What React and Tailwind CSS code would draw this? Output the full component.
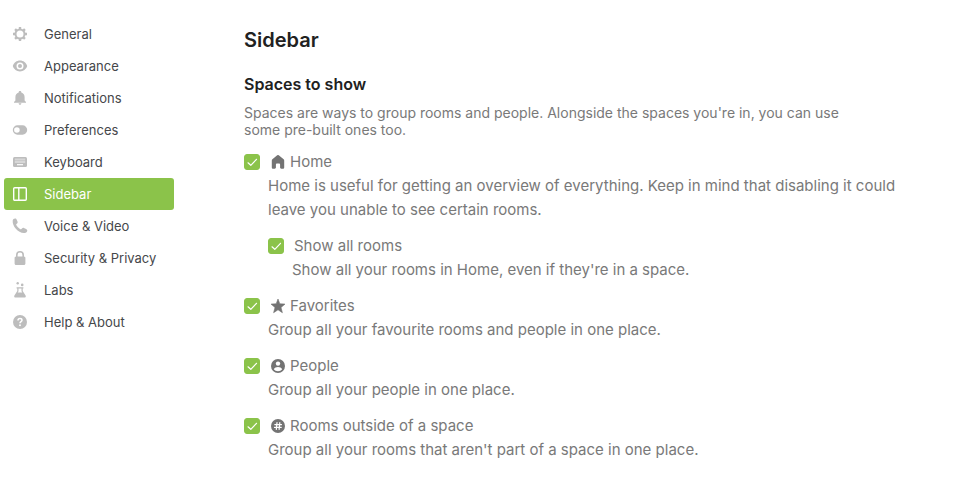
import React, { useState } from "react";

function GearIcon() {
  return (
    <svg viewBox="0 0 16 16" className="size-4" fill="none" stroke="currentColor" aria-hidden="true">
      <circle cx="8" cy="8" r="4.500" strokeWidth="2" />
      <path
        d="M8 1v2M8 13v2M1 8h2M13 8h2M3.050 3.050l1.400 1.400M11.550 11.550l1.400 1.400M3.050 12.950l1.400-1.400M11.550 4.450l1.400-1.400"
        strokeWidth="2.400"
      />
    </svg>
  );
}

function EyeIcon() {
  return (
    <svg viewBox="0 0 16 16" className="size-4" fill="currentColor" aria-hidden="true">
      <path
        fillRule="evenodd"
        d="M8 2.600C4.700 2.600 1.800 4.800.8 8c1 3.200 3.900 5.400 7.200 5.400s6.200-2.200 7.200-5.400c-1-3.200-3.900-5.400-7.200-5.400ZM8 4.500a3.500 3.500 0 1 1 0 7 3.500 3.500 0 0 1 0-7Z"
      />
      <circle cx="8" cy="8" r="2" />
    </svg>
  );
}

function BellIcon() {
  return (
    <svg viewBox="0 0 16 16" className="size-4" fill="currentColor" aria-hidden="true">
      <path d="M8 1c.8 0 1.300.5 1.300 1.200v.4C11.500 3.200 12.600 5 12.600 7.200v3.300l1.400 1.400v.9H2v-.9l1.400-1.400V7.200c0-2.200 1.100-4 3.300-4.600v-.4C6.700 1.500 7.200 1 8 1ZM6.600 13.300h2.800c0 .8-.6 1.500-1.400 1.500s-1.400-.7-1.400-1.500Z" />
    </svg>
  );
}

function ToggleIcon() {
  return (
    <svg viewBox="0 0 16 16" className="size-4" fill="currentColor" aria-hidden="true">
      <path
        fillRule="evenodd"
        d="M5.500 3.300h5a4.700 4.700 0 0 1 0 9.400h-5a4.700 4.700 0 0 1 0-9.400ZM4.900 5.200a2.800 2.800 0 1 0 0 5.600 2.800 2.800 0 0 0 0-5.600Z"
      />
    </svg>
  );
}

function KeyboardIcon() {
  return (
    <svg viewBox="0 0 16 16" className="size-4" fill="currentColor" aria-hidden="true">
      <rect x="1" y="3" width="14" height="10" rx="1.500" />
      <path d="M2.800 5.600h10.400M2.800 8h10.400" stroke="#fff" strokeWidth="2" opacity=".4" />
      <path d="M5 10.700h6" stroke="#fff" strokeWidth="1.200" />
    </svg>
  );
}

function PanelIcon() {
  return (
    <svg viewBox="0 0 16 16" className="size-4" fill="none" stroke="currentColor" strokeWidth="1.400" aria-hidden="true">
      <rect x="1.700" y="1.700" width="12.600" height="12.600" rx="1" />
      <path d="M6.800 2v12" />
    </svg>
  );
}

function PhoneIcon() {
  return (
    <svg viewBox="0 0 16 16" className="size-4" fill="currentColor" aria-hidden="true">
      <path d="M.7 2.600C.9 1.300 2 .4 3.200.5c.8 0 1.200.5 1.500 1.200l.8 1.800c.3.800.2 1.400-.4 1.900l-.7.6c-.3.300-.3.700-.1 1.100.9 1.700 2.300 3.100 4 4.100.4.200.8.200 1.100-.1l.6-.7c.5-.6 1.200-.7 1.900-.4l2.200.9c.8.300 1.200.9 1.200 1.600-.1 1.300-1.100 2.400-2.600 2.500C6.500 15.600.1 8.500.7 2.600Z" />
    </svg>
  );
}

function LockIcon() {
  return (
    <svg viewBox="0 0 16 16" className="size-4" fill="currentColor" aria-hidden="true">
      <path
        fillRule="evenodd"
        d="M4 6.500V5a4 4 0 0 1 8 0v1.500c.8.100 1.400.6 1.400 1.400v5.600c0 .9-.6 1.500-1.500 1.500H4.100c-.9 0-1.500-.6-1.500-1.500V7.900c0-.8.6-1.300 1.400-1.400Zm1.600 0h4.800V5a2.400 2.400 0 0 0-4.800 0Z"
      />
    </svg>
  );
}

function FlaskIcon() {
  return (
    <svg viewBox="0 0 16 16" className="size-4" fill="currentColor" aria-hidden="true">
      <circle cx="5.700" cy="1.200" r="1.200" />
      <circle cx="10.200" cy="2.900" r="1.300" />
      <path
        fillRule="evenodd"
        d="M4.600 5.200h6.800v1.200h-.7v2.500l2.900 4.500c.6 1-.1 2.100-1.200 2.100H3.600c-1.100 0-1.800-1.100-1.200-2.100l2.900-4.500V6.400h-.7Zm1.900 1.200v2.900L5.700 10.600h4.600L9.500 9.300V6.400Z"
      />
    </svg>
  );
}

function HelpIcon() {
  return (
    <svg viewBox="0 0 16 16" className="size-4" aria-hidden="true">
      <circle cx="8" cy="8" r="7" fill="currentColor" />
      <path d="M6 6.500C6 5.200 6.800 4.500 8 4.500s2 .7 2 1.700c0 1.400-2 1.500-2 3.100" fill="none" stroke="#fff" strokeWidth="1.500" />
      <circle cx="8" cy="11.300" r=".95" fill="#fff" />
    </svg>
  );
}

function HomeIcon() {
  return (
    <svg viewBox="0 0 16 16" className="size-4" fill="currentColor" aria-hidden="true">
      <path d="M7.200 1.300a1.300 1.300 0 0 1 1.600 0l4.800 4c.4.300.6.700.6 1.200v7c0 .8-.6 1.300-1.300 1.300h-1.600c-.7 0-1.200-.5-1.200-1.200V10.500c0-.5-.4-.9-.9-.9H6.800c-.5 0-.9.4-.9.900v3.100c0 .7-.5 1.200-1.200 1.200H3.100c-.7 0-1.300-.5-1.300-1.300v-7c0-.5.2-.9.6-1.200Z" />
    </svg>
  );
}

function StarIcon() {
  return (
    <svg viewBox="0 0 16 16" className="size-4" fill="currentColor" stroke="currentColor" strokeWidth=".6" strokeLinejoin="round" aria-hidden="true">
      <path d="M8 1 9.800 5.800 15 6.100 11 9.500 12.400 14.700 8 11.800 3.600 14.700 5 9.500 1 6.100 6.200 5.800Z" />
    </svg>
  );
}

function PersonIcon() {
  return (
    <svg viewBox="0 0 16 16" className="size-4" aria-hidden="true">
      <circle cx="8" cy="8" r="7" fill="currentColor" />
      <circle cx="8" cy="5.600" r="2.200" fill="#fff" />
      <path d="M3.800 11.200C4.600 9.600 6.200 8.900 8 8.900s3.400.7 4.200 2.300C11.300 12.500 9.700 13.200 8 13.200s-3.300-.7-4.200-2Z" fill="#fff" />
    </svg>
  );
}

function HashIcon() {
  return (
    <svg viewBox="0 0 16 16" className="size-4" aria-hidden="true">
      <circle cx="8" cy="8" r="7" fill="currentColor" />
      <path d="M7 4.600 6.300 11.400M9.800 4.600 9.100 11.400M4.800 6.600h6.700M4.500 9.400h6.700" fill="none" stroke="#fff" strokeWidth="1.200" strokeLinecap="round" />
    </svg>
  );
}

const tabs = [
  { label: "General", Icon: GearIcon },
  { label: "Appearance", Icon: EyeIcon },
  { label: "Notifications", Icon: BellIcon },
  { label: "Preferences", Icon: ToggleIcon },
  { label: "Keyboard", Icon: KeyboardIcon },
  { label: "Sidebar", Icon: PanelIcon },
  { label: "Voice & Video", Icon: PhoneIcon },
  { label: "Security & Privacy", Icon: LockIcon },
  { label: "Labs", Icon: FlaskIcon },
  { label: "Help & About", Icon: HelpIcon },
];

function Tab({ label, Icon, active, onSelect }) {
  return (
    <button
      type="button"
      onClick={onSelect}
      aria-current={active ? "page" : undefined}
      className={
        active
          ? "flex h-8 w-full items-center gap-4 rounded-[3px] bg-[#8bc34a] px-2 text-left text-white"
          : "flex h-8 w-full items-center gap-4 rounded-[3px] px-2 text-left text-[#45474a]"
      }
    >
      <span className={active ? "text-white" : "text-[#bdbdbd]"}>
        <Icon />
      </span>
      {label}
    </button>
  );
}

function Option({ id, label, Icon, description, children }) {
  const [checked, setChecked] = useState(true);
  return (
    <div>
      <div className="flex h-6 items-center gap-2.5">
        <span className="grid size-4 shrink-0">
          <input
            id={id}
            type="checkbox"
            checked={checked}
            onChange={(event) => setChecked(event.target.checked)}
            aria-describedby={`${id}-description`}
            className="col-start-1 row-start-1 size-4 appearance-none rounded-[3px] border border-[#8bc34a] checked:bg-[#8bc34a]"
          />
          {checked && (
            <svg viewBox="0 0 16 16" className="pointer-events-none col-start-1 row-start-1 size-4" fill="none" stroke="#fff" strokeWidth="1.200" strokeLinecap="round" strokeLinejoin="round" aria-hidden="true">
              <path d="M4 8.800 6.800 11.300 12.500 5.300" />
            </svg>
          )}
        </span>
        <label htmlFor={id} className="flex items-center gap-1">
          {Icon && (
            <span className="text-[#737373]">
              <Icon />
            </span>
          )}
          {label}
        </label>
      </div>
      <p id={`${id}-description`} className="pl-6">
        {description}
      </p>
      {children && <div className="mt-3 pl-6">{children}</div>}
    </div>
  );
}

export default function App() {
  const [current, setCurrent] = useState("Sidebar");
  return (
    <div className="flex min-h-screen gap-[70px] bg-white pr-8 pl-1 font-['Inter','Liberation_Sans',sans-serif] text-[15px] leading-6 text-[#797979]">
      <nav aria-label="Settings" className="w-[170px] shrink-0 pt-[18px] text-[13px]">
        {tabs.map((tab) => (
          <Tab key={tab.label} {...tab} active={tab.label === current} onSelect={() => setCurrent(tab.label)} />
        ))}
      </nav>
      <main className="min-w-0 flex-1 pt-7 pb-10">
        <h1 className="text-xl leading-6 font-semibold text-[#212121]">Sidebar</h1>
        <h2 className="mt-5 text-base leading-6 font-semibold text-[#212121]">Spaces to show</h2>
        <p className="mt-2 mr-20 text-sm leading-[17px]">
          Spaces are ways to group rooms and people. Alongside the spaces you're in, you can use some pre-built ones too.
        </p>
        <div className="mt-3 flex flex-col gap-3">
          <Option
            id="home"
            label="Home"
            Icon={HomeIcon}
            description="Home is useful for getting an overview of everything. Keep in mind that disabling it could leave you unable to see certain rooms."
          >
            <Option
              id="all-rooms"
              label="Show all rooms"
              description="Show all your rooms in Home, even if they're in a space."
            />
          </Option>
          <Option
            id="favorites"
            label="Favorites"
            Icon={StarIcon}
            description="Group all your favourite rooms and people in one place."
          />
          <Option id="people" label="People" Icon={PersonIcon} description="Group all your people in one place." />
          <Option
            id="outside"
            label="Rooms outside of a space"
            Icon={HashIcon}
            description="Group all your rooms that aren't part of a space in one place."
          />
        </div>
      </main>
    </div>
  );
}
